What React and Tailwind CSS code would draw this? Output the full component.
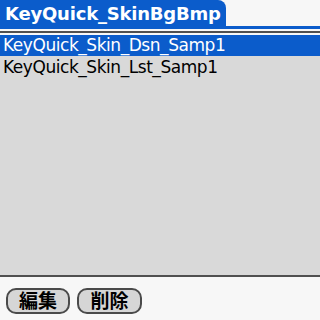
export default function App() {
  const font = { fontFamily: '"DejaVu Sans", "Noto Sans CJK JP", sans-serif' };
  return (
    <div className="w-[320px] h-[320px] bg-[#f7f7f7] flex flex-col overflow-hidden" style={font}>
      <div className="h-[26px] flex">
        <div className="w-[226px] bg-[#0b5ccb] rounded-tr-[8px] text-white font-bold text-[18px] leading-[27px] pl-[5px] tracking-[-0.2px] whitespace-nowrap">
          KeyQuick_SkinBgBmp
        </div>
      </div>
      <div className="h-[3px] bg-[#0b5ccb]" />
      <div className="h-[2px]" />
      <div className="h-[2px] bg-[#505050]" />
      <div className="h-[2px]" />
      <div className="h-[240px] bg-[#d9d9d9] flex flex-col text-[17px] tracking-[-0.45px]">
        <div className="h-[21px] bg-[#0b5ccb] text-white leading-[21px] pl-[3px] whitespace-nowrap">KeyQuick_Skin_Dsn_Samp1</div>
        <div className="h-[22px] text-black leading-[22px] pl-[3px] whitespace-nowrap">KeyQuick_Skin_Lst_Samp1</div>
      </div>
      <div className="h-[2px] bg-[#505050]" />
      <div className="flex gap-[7px] pl-[6px] pt-[11px]">
        <button className="w-[64px] h-[26px] rounded-[10px] border-2 border-[#4a4a4a] bg-[#d6d6d6] text-black text-[19px] font-bold leading-none flex items-center justify-center">編集</button>
        <button className="w-[65px] h-[26px] rounded-[10px] border-2 border-[#4a4a4a] bg-[#d6d6d6] text-black text-[19px] font-bold leading-none flex items-center justify-center">削除</button>
      </div>
    </div>
  );
}
